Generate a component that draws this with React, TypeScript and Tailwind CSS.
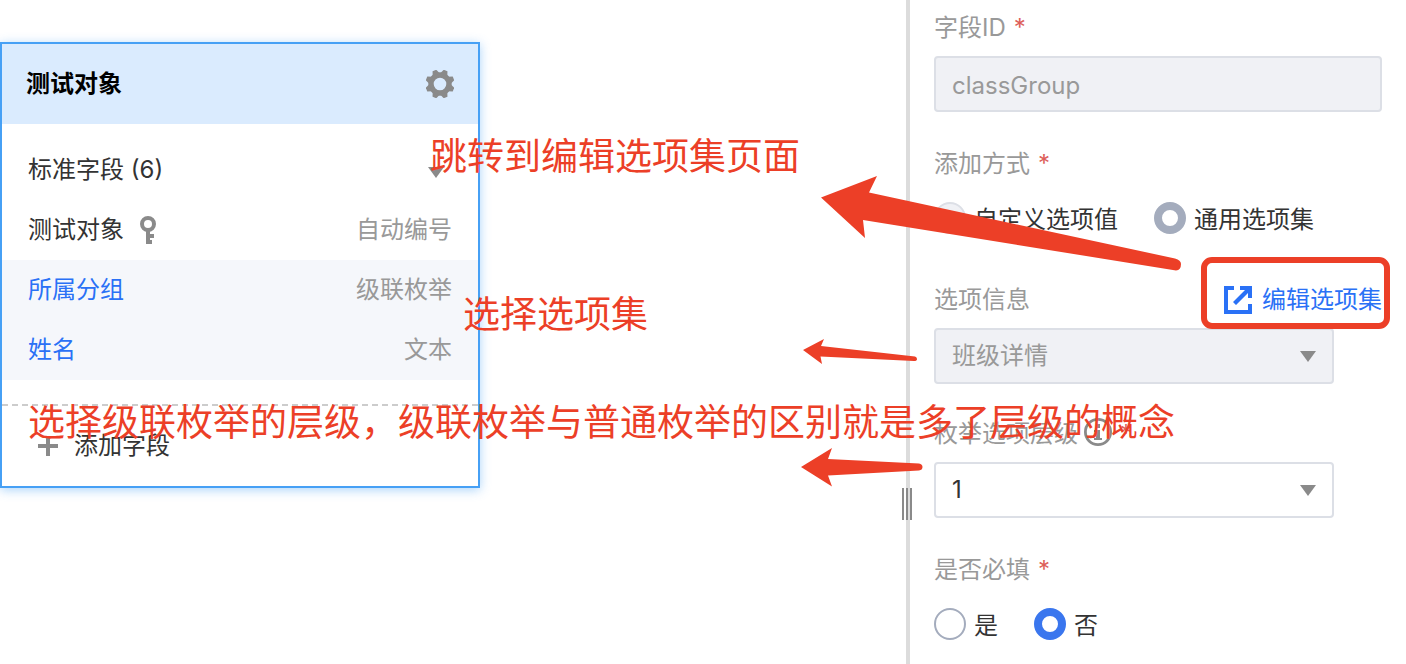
import { ReactNode, useState } from "react";

interface FieldRow {
  name: string;
  type: string;
  primary?: boolean;
  custom?: boolean;
}

const fields: FieldRow[] = [
  { name: "测试对象", type: "自动编号", primary: true },
  { name: "所属分组", type: "级联枚举", custom: true },
  { name: "姓名", type: "文本", custom: true },
];

function GearIcon() {
  return (
    <svg width="28" height="28" viewBox="0 0 28 28" fill="#8a8a8a" aria-hidden="true">
      <circle cx="14" cy="14" r="9" fill="none" stroke="#8a8a8a" strokeWidth="5.4" />
      {[22.5, 67.5, 112.5, 157.5].map((a) => (
        <g key={a} transform={`rotate(${a} 14 14)`}>
          <path d="M12 -0.6h4l1.8 4.6h-7.6z" />
          <path d="M12 28.6h4l1.8 -4.6h-7.6z" />
        </g>
      ))}
    </svg>
  );
}

function KeyIcon() {
  return (
    <svg width="16" height="28" viewBox="0 0 16 28" fill="none" aria-hidden="true">
      <circle cx="8" cy="8" r="6" stroke="#8a8a8a" strokeWidth="4" />
      <path d="M6 15h4v3h4v4h-4v2h2v4H6z" fill="#8a8a8a" />
    </svg>
  );
}

function Caret() {
  return (
    <svg width="16" height="11" viewBox="0 0 16 11" fill="#8a8a8a" aria-hidden="true">
      <path d="M0 0h16L8 11z" />
    </svg>
  );
}

function PlusIcon() {
  return (
    <svg width="20" height="20" viewBox="0 0 20 20" stroke="#8a8a8a" strokeWidth="4" aria-hidden="true">
      <path d="M10 0v20M0 10h20" />
    </svg>
  );
}

function OpenIcon() {
  return (
    <svg width="28" height="28" viewBox="0 0 28 28" fill="#2a71f6" aria-hidden="true">
      <path d="M0 0h10v4H4v20h20v-6h4v10H0z" />
      <path d="M16 0h12v12h-4V7L12 19l-3-3L21 4h-5z" />
    </svg>
  );
}

function InfoIcon() {
  return (
    <svg className="mb-1" width="28" height="28" viewBox="0 0 28 28" aria-hidden="true">
      <circle cx="14" cy="14" r="12.6" fill="none" stroke="#8a8a8a" strokeWidth="2.8" />
      <path d="M12 6h4v4h-4zM10 12h6v8h2v2h-8v-2h2v-6h-2z" fill="#8a8a8a" />
    </svg>
  );
}

function Required() {
  return <span className="ml-2 text-[#dd5f5a]">*</span>;
}

function Select({ id, options, disabled }: { id: string; options: string[]; disabled?: boolean }) {
  return (
    <div className="relative mr-12">
      <select
        id={id}
        disabled={disabled}
        className="block h-14 w-full appearance-none rounded border-2 border-[#dcdfe6] bg-white pr-12 pl-4 text-[#333] opacity-100 outline-none disabled:bg-[#f0f1f5] disabled:text-[#999]"
      >
        {options.map((o) => (
          <option key={o}>{o}</option>
        ))}
      </select>
      <span className="pointer-events-none absolute inset-y-0 right-[18px] flex items-center">
        <Caret />
      </span>
    </div>
  );
}

function Radio({
  name,
  checked,
  disabled,
  onChange,
  children,
}: {
  name: string;
  checked: boolean;
  disabled?: boolean;
  onChange?: () => void;
  children: ReactNode;
}) {
  return (
    <label className="flex items-center gap-2 whitespace-nowrap text-[#333]">
      <input
        type="radio"
        name={name}
        checked={checked}
        disabled={disabled}
        onChange={() => onChange?.()}
        className="size-8 appearance-none rounded-full border-2 border-[#a4acbd] bg-white checked:border-8 checked:border-[#3a76ee] disabled:border-[#dcdfe6] disabled:bg-[#f0f1f5] disabled:checked:border-[#a4acbd] disabled:checked:bg-white"
      />
      <span className="pt-1">{children}</span>
    </label>
  );
}

function ObjectCard() {
  return (
    <section className="mt-[42px] w-[480px] border-2 border-[#46a0f5] bg-white shadow-[0_2px_10px_rgba(70,160,245,0.45)]">
      <header className="flex h-20 items-center justify-between bg-[#daebfe] px-6">
        <h2 className="font-bold text-black">测试对象</h2>
        <button type="button" aria-label="设置">
          <GearIcon />
        </button>
      </header>
      <div className="pt-4 pb-6">
        <button type="button" className="flex h-15 w-full items-center justify-between pr-[34px] pl-[26px]">
          标准字段 (6)
          <span className="pt-1">
            <Caret />
          </span>
        </button>
        <ul>
          {fields.map((f) => (
            <li
              key={f.name}
              className={`flex h-15 items-center justify-between px-[26px] ${
                f.custom ? "bg-[#f5f7fb] text-[#2a71f6]" : ""
              }`}
            >
              <span className="flex items-center gap-4">
                {f.name}
                {f.primary && <KeyIcon />}
              </span>
              <span className="text-[#999]">{f.type}</span>
            </li>
          ))}
        </ul>
      </div>
      <button
        type="button"
        className="flex h-[82px] w-full items-center gap-4 border-t-2 border-dashed border-[#ccc] pl-9"
      >
        <PlusIcon />
        添加字段
      </button>
    </section>
  );
}

function FieldPanel() {
  const [required, setRequired] = useState(false);

  return (
    <form className="flex w-[496px] shrink-0 flex-col gap-9 px-6 pt-3 text-[#999]">
      <div>
        <label htmlFor="field-id" className="mb-3 flex h-8 items-center">
          字段ID
          <Required />
        </label>
        <input
          id="field-id"
          value="classGroup"
          disabled
          readOnly
          className="block h-14 w-full rounded border-2 border-[#dcdfe6] bg-[#f0f1f5] px-4 pt-[2px]"
        />
      </div>

      <div role="group" aria-labelledby="mode-label">
        <div id="mode-label" className="mb-3 flex h-8 items-center">
          添加方式
          <Required />
        </div>
        <div className="flex h-14 items-center gap-9 pb-1">
          <Radio name="mode" checked={false} disabled>
            自定义选项值
          </Radio>
          <Radio name="mode" checked disabled>
            通用选项集
          </Radio>
        </div>
      </div>

      <div className="flex flex-col gap-[34px]">
        <div>
          <div className="mb-3 flex h-8 items-center justify-between">
            <label htmlFor="option-set">选项信息</label>
            <a href="#option-set" className="flex items-center gap-[10px] text-[#2a71f6]">
              <OpenIcon />
              编辑选项集
            </a>
          </div>
          <Select id="option-set" options={["班级详情"]} disabled />
        </div>
        <div>
          <label htmlFor="level" className="mb-3 flex h-8 items-center">
            <span className="mr-[6px]">枚举选项层级</span>
            <InfoIcon />
            <Required />
          </label>
          <Select id="level" options={["1", "2", "3"]} />
        </div>
      </div>

      <div role="group" aria-labelledby="required-label">
        <div id="required-label" className="mb-3 flex h-8 items-center">
          是否必填
          <Required />
        </div>
        <div className="flex h-14 items-center gap-9 pb-1">
          <Radio name="required" checked={required} onChange={() => setRequired(true)}>
            是
          </Radio>
          <Radio name="required" checked={!required} onChange={() => setRequired(false)}>
            否
          </Radio>
        </div>
      </div>
    </form>
  );
}

// Red notes and arrows drawn on top of the editor
function Annotations() {
  return (
    <div className="pointer-events-none absolute inset-0 text-[37px] leading-[48px] whitespace-nowrap text-[#ec3f27]">
      <p className="absolute top-[133px] left-[430px]">跳转到编辑选项集页面</p>
      <p className="absolute top-[291px] left-[463px]">选择选项集</p>
      <p className="absolute top-[399px] left-[28px]">
        选择级联枚举的层级，级联枚举与普通枚举的区别就是多了层级的概念
      </p>
      <svg className="absolute top-0 left-0" width="1406" height="664" viewBox="0 0 1406 664" fill="#ec3f27" aria-hidden="true">
        <path d="M821 197.5L877 176L869 192.5L1175 258.5Q1181 260 1181 264Q1181 270 1176 270.5L863 220L865 238Z" />
        <path d="M803 350L824 339L821 346L915 356.5Q917 357 917 359Q917 361 914 361L820.5 356.5L822 364Z" />
        <path d="M801 467L832 448L828 459L919 463.5Q922.5 464 922.5 467Q922.5 470 919 470.5L828 475.5L832 486.5Z" />
        <rect x="1204" y="260" width="183" height="66" rx="8" fill="none" stroke="#ec3f27" strokeWidth="6" />
      </svg>
    </div>
  );
}

export default function App() {
  return (
    <div className="relative flex min-h-screen overflow-hidden bg-white font-['Inter','Noto_Sans_CJK_SC',sans-serif] text-2xl text-[#333]">
      <main className="min-w-0 flex-1">
        <ObjectCard />
      </main>
      <div role="separator" aria-orientation="vertical" className="relative w-1 shrink-0 bg-[#dcdcdc]">
        <div className="absolute top-[488px] -left-1 flex h-8 gap-[2px]">
          <span className="w-[2px] bg-[#8a8a8a]" />
          <span className="w-[2px] bg-[#8a8a8a]" />
          <span className="w-[2px] bg-[#8a8a8a]" />
        </div>
      </div>
      <FieldPanel />
      <Annotations />
    </div>
  );
}
